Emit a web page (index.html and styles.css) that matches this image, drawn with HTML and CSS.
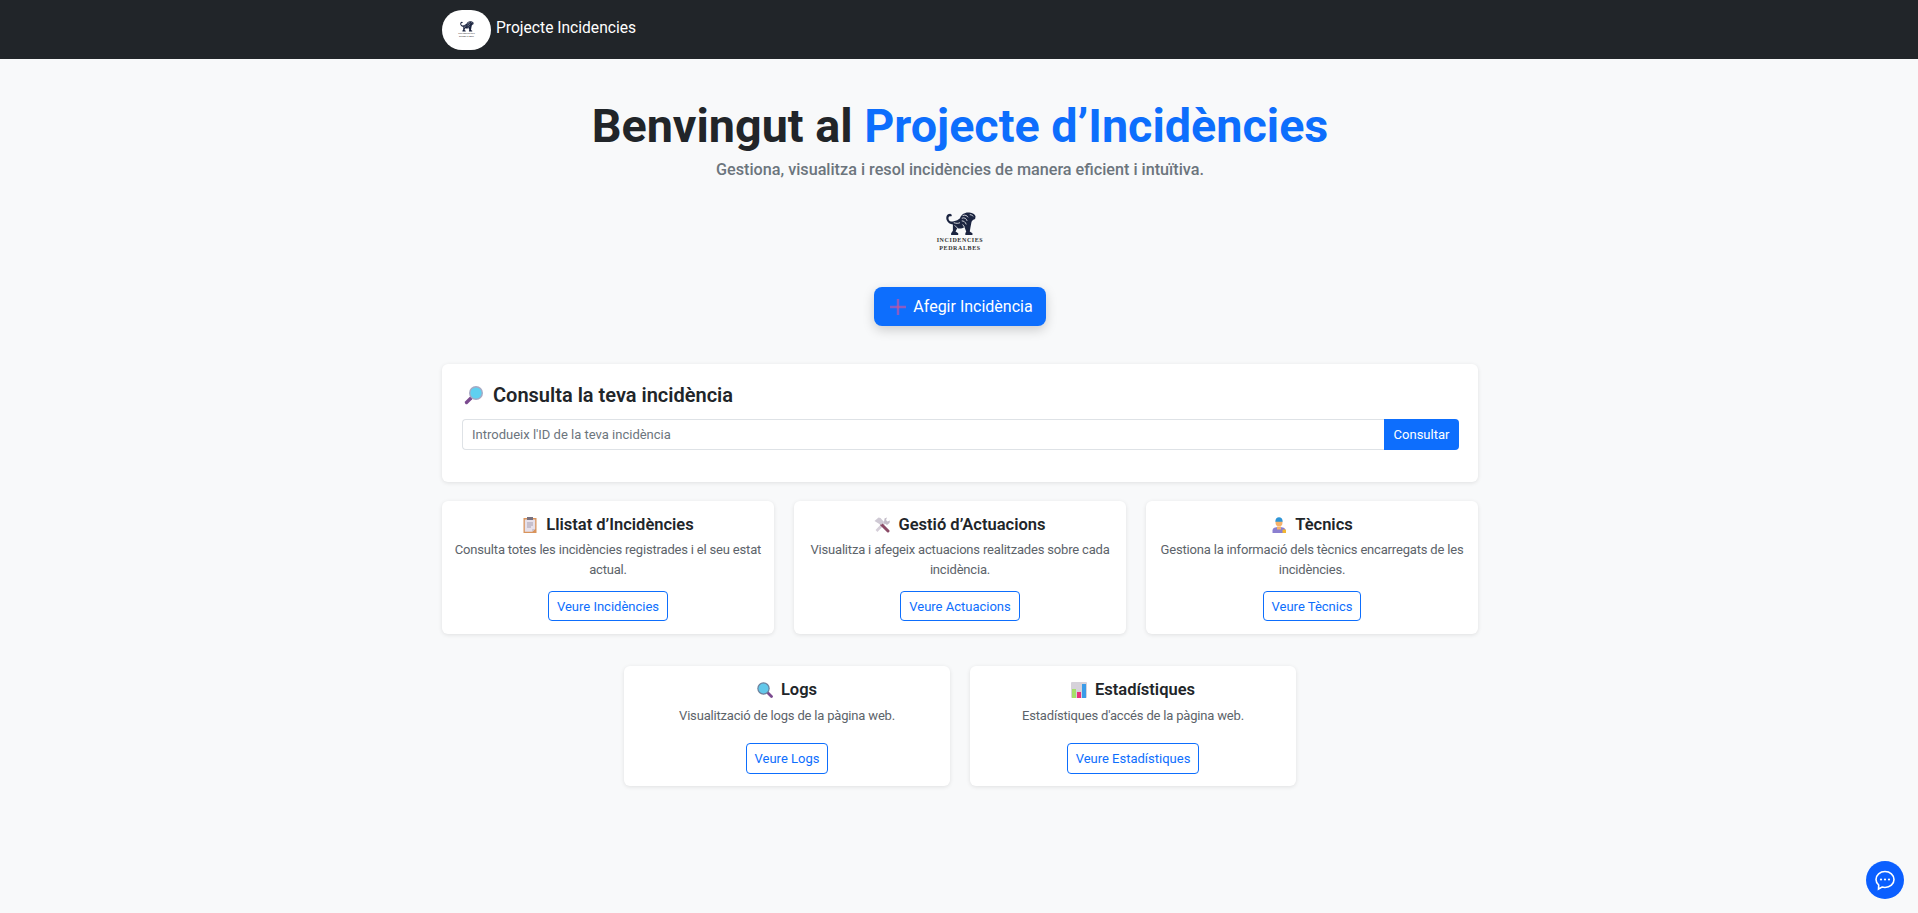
FILE: index.html
```html
<!DOCTYPE html>
<html lang="ca">
<head>
    <meta charset="UTF-8">
    <meta name="viewport" content="width=device-width, initial-scale=1.0">
    <title>Projecte Incidencies</title>
    <link rel="stylesheet" href="styles.css">
</head>
<body>
    <svg class="sprites" width="0" height="0">
        <symbol id="lion" viewBox="0 0 36 27">
            <path fill="#1b2440" d="M18 7C19 3 23 .5 27 .5C31 .5 35 2 35.500 5L35 8L32.500 9L31 11L30 16L29 22L32 24L32 26L24 26L24 24L25 22L23 17C20 19 17 19 15 18L13 22L16 24L16 26L8 26L8 24L10 21L10 14C7 14 4 12 3 9C2 6 3 2 7 2L9 3.500L8 5C5 4 4.500 7 5.500 9C6.500 11 9 11 11 10.500C14 9.500 16 9 18 7Z"/>
            <path fill="none" stroke="#f8f9fa" stroke-width=".9" d="M21 4C24 3 26 4 27 6M20 7C23 6 25 7 26 10M20 10C22 10 24 11 25 14M29 3C31 3 32 4 33 5M15 18L12 15M23 17L21 14M11 12C14 13 16 13 18 12"/>
        </symbol>
    </svg>

    <nav class="navbar">
        <div class="container">
            <a class="brand" href="#">
                <span class="brand-logo">
                    <svg class="brand-lion"><use href="#lion"/></svg>
                    <span class="brand-logo-text">INCIDENCIES</span>
                    <span class="brand-logo-text">PEDRALBES</span>
                </span>
                <span class="brand-name">Projecte Incidencies</span>
            </a>
        </div>
    </nav>

    <main class="container">
        <section class="hero">
            <h1>Benvingut al <span class="accent">Projecte d’Incidències</span></h1>
            <p class="lead">Gestiona, visualitza i resol incidències de manera eficient i intuïtiva.</p>
            <div class="logo">
                <svg class="logo-lion"><use href="#lion"/></svg>
                <span class="logo-text">INCIDENCIES</span>
                <span class="logo-text">PEDRALBES</span>
            </div>
            <a class="add-btn" href="#">
                <svg class="plus" viewBox="0 0 16 16"><path fill="#8a5cc4" d="M6.800 0h2.400v6.800H16v2.400H9.200V16H6.800V9.200H0V6.800h6.800z"/><path fill="#c0568f" d="M6.800 6.800h2.400v2.400H6.800z"/></svg>
                Afegir Incidència
            </a>
        </section>

        <section class="search-card">
            <h2>
                <svg class="search-icon" viewBox="0 0 20 20">
                    <path stroke="#7b4a8f" stroke-width="3.400" stroke-linecap="round" d="M2.500 17.500L7 13"/>
                    <circle cx="12" cy="8" r="7" fill="#a5a9c4"/>
                    <circle cx="12" cy="8" r="5.600" fill="#5fd0f0"/>
                </svg>
                Consulta la teva incidència
            </h2>
            <form class="search-form" action="#">
                <input type="text" placeholder="Introdueix l'ID de la teva incidència">
                <button type="submit">Consultar</button>
            </form>
        </section>

        <div class="cards">
            <article class="card">
                <h3>
                    <svg class="icon" viewBox="0 0 16 16">
                        <rect x="1.500" y="1" width="13" height="15" fill="#d9945c"/>
                        <path fill="#e6e0ea" d="M2.800 2.500h10.400v9.500l-3 2.800H2.800z"/>
                        <path fill="#c9c0cc" d="M13.200 12l-3 2.800V12z"/>
                        <rect x="5" y="0" width="6" height="3" fill="#77707e"/>
                        <path stroke="#a79fb0" d="M5 6h6M5 8h6M5 10h4"/>
                    </svg>
                    Llistat d’Incidències
                </h3>
                <p>Consulta totes les incidències registrades i el seu estat actual.</p>
                <a class="card-btn" href="#">Veure Incidències</a>
            </article>
            <article class="card">
                <h3>
                    <svg class="icon" viewBox="0 0 16 16">
                        <path stroke="#d6cfd9" stroke-width="2.600" d="M2.500 14L11.500 4.500"/>
                        <path fill="#c3bcc8" d="M10.500 1.500L13 .5l-1 2.500 1.500 1.500L16 3.500 15.500 6 13 8 10 6z"/>
                        <path stroke="#8a4a66" stroke-width="3" stroke-linecap="round" d="M7.500 7.500l6.500 6.500"/>
                        <path fill="#cfc9d4" d="M.5 4L4.500 .5l2 .5L10 5 7 8z"/>
                    </svg>
                    Gestió d’Actuacions
                </h3>
                <p>Visualitza i afegeix actuacions realitzades sobre cada incidència.</p>
                <a class="card-btn" href="#">Veure Actuacions</a>
            </article>
            <article class="card">
                <h3>
                    <svg class="icon" viewBox="0 0 16 16">
                        <path fill="#8b7fd0" d="M1.500 16v-2.500C1.500 11 4 10 8 10s6.500 1 6.500 3.500V16z"/>
                        <rect x="11.500" y="12.500" width="3.500" height="3.500" fill="#f2b632"/>
                        <circle cx="8" cy="5.800" r="3.500" fill="#f6b26b"/>
                        <path fill="#2f95d6" d="M4.300 4.800C4.300 1.500 6 .3 8 .3s3.700 1.200 3.700 4.500z"/>
                        <rect x="6" y="9.500" width="4" height="3" fill="#f6b26b"/>
                    </svg>
                    Tècnics
                </h3>
                <p>Gestiona la informació dels tècnics encarregats de les incidències.</p>
                <a class="card-btn" href="#">Veure Tècnics</a>
            </article>
        </div>

        <div class="cards cards-small">
            <article class="card">
                <h3>
                    <svg class="icon" viewBox="0 0 16 16">
                        <path stroke="#7b4a8f" stroke-width="2.800" stroke-linecap="round" d="M11 11l3.500 3.500"/>
                        <circle cx="6.500" cy="6.500" r="6.200" fill="#6d7f9b"/>
                        <circle cx="6.500" cy="6.500" r="5" fill="#63c8ea"/>
                    </svg>
                    Logs
                </h3>
                <p>Visualització de logs de la pàgina web.</p>
                <a class="card-btn" href="#">Veure Logs</a>
            </article>
            <article class="card">
                <h3>
                    <svg class="icon" viewBox="0 0 16 16">
                        <rect width="16" height="16" rx="1" fill="#d6d2da"/>
                        <rect x="1" y="7" width="4" height="9" fill="#a5e06a"/>
                        <rect x="6" y="10" width="4" height="6" fill="#e8327c"/>
                        <rect x="11" y="2" width="4" height="14" fill="#3a9be8"/>
                    </svg>
                    Estadístiques
                </h3>
                <p>Estadístiques d'accés de la pàgina web.</p>
                <a class="card-btn" href="#">Veure Estadístiques</a>
            </article>
        </div>
    </main>

    <a class="chat-btn" href="#">
        <svg viewBox="0 0 24 24" width="24" height="24">
            <path fill="none" stroke="#fff" stroke-width="1.600" d="M12 3.500c5 0 9 3.400 9 8s-4 8-9 8c-1 0-2-.1-3-.4L5.500 21l.2-4C4 15.500 3 13.600 3 11.500c0-4.600 4-8 9-8z"/>
            <circle cx="8" cy="11.500" r="1.100" fill="#fff"/>
            <circle cx="12" cy="11.500" r="1.100" fill="#fff"/>
            <circle cx="16" cy="11.500" r="1.100" fill="#fff"/>
        </svg>
    </a>
</body>
</html>
```

FILE: styles.css
```css
*{
    margin: 0;
    padding: 0;
    box-sizing: border-box;
}
body{
    min-height: 100vh;
    background: #f8f9fa;
    color: #212529;
    font-family: Roboto, "Open Sans", sans-serif;
    font-size: 13px;
}
a{
    text-decoration: none;
}
.sprites{
    position: absolute;
}
.container{
    width: 1036px;
    margin: 0 440px 0 442px;
}

/* navbar */
.navbar{
    height: 59px;
    background: #212529;
    display: flex;
    align-items: center;
}
.brand{
    display: flex;
    align-items: center;
    gap: 5px;
    color: #fff;
    font-size: 15.600px;
}
.brand-name{
    margin-bottom: 4px;
}
.brand-logo{
    width: 49px;
    height: 40px;
    border-radius: 20px;
    background: #fff;
    display: flex;
    flex-direction: column;
    align-items: center;
    justify-content: center;
}
.brand-lion{
    width: 15px;
    height: 11px;
}
.brand-logo-text{
    color: #333;
    font-family: "Liberation Serif", serif;
    font-size: 2.500px;
    font-weight: 700;
    line-height: 3px;
}

/* hero */
.hero{
    display: flex;
    flex-direction: column;
    align-items: center;
    padding-top: 38px;
}
h1{
    font-size: 46.700px;
    font-weight: 700;
    line-height: 58px;
}
.accent{
    color: #0d6efd;
}
.lead{
    color: #6c757d;
    font-size: 16.200px;
    font-weight: 500;
    line-height: 24px;
    margin-top: 3px;
}
.logo{
    display: flex;
    flex-direction: column;
    align-items: center;
    margin-top: 30px;
    height: 40px;
}
.logo-lion{
    width: 36px;
    height: 26px;
}
.logo-text{
    color: #333;
    font-family: "Liberation Serif", serif;
    font-size: 6px;
    font-weight: 700;
    letter-spacing: 0.6px;
    line-height: 8px;
}
.add-btn{
    margin-top: 35px;
    width: 172px;
    height: 39px;
    padding-left: 3px;
    border-radius: 8px;
    background: #0d6efd;
    color: #fff;
    font-size: 16px;
    display: flex;
    align-items: center;
    justify-content: center;
    gap: 7px;
    box-shadow: 0 4px 12px rgba(0, 0, 0, 0.18);
}
.plus{
    width: 16px;
    height: 16px;
}

/* consulta */
.search-card{
    margin-top: 38px;
    height: 118px;
    padding: 19px 19px 0 20px;
    background: #fff;
    border-radius: 6px;
    box-shadow: 0 1px 4px rgba(0, 0, 0, 0.1);
}
.search-card h2{
    display: flex;
    align-items: center;
    gap: 9px;
    font-size: 20px;
    font-weight: 600;
    line-height: 24px;
    margin: 0 0 12px 2px;
}
.search-icon{
    width: 20px;
    height: 20px;
}
.search-form{
    display: flex;
    height: 31px;
}
.search-form input{
    flex: 1;
    padding: 0 9px;
    border: 1px solid #dee2e6;
    border-right: none;
    border-radius: 4px 0 0 4px;
    outline: none;
    color: #212529;
    font: inherit;
}
.search-form input::placeholder{
    color: #6c757d;
}
.search-form button{
    width: 75px;
    border: none;
    border-radius: 0 4px 4px 0;
    background: #0d6efd;
    color: #fff;
    font: inherit;
}

/* targetes */
.cards{
    display: flex;
    gap: 20px;
    margin-top: 19px;
}
.card{
    flex: 1;
    height: 133px;
    padding: 12px 10px 0;
    background: #fff;
    border-radius: 6px;
    box-shadow: 0 1px 4px rgba(0, 0, 0, 0.1);
    display: flex;
    flex-direction: column;
    align-items: center;
    text-align: center;
}
.card h3{
    display: flex;
    align-items: center;
    gap: 8px;
    font-size: 16.500px;
    font-weight: 600;
    line-height: 24px;
}
.icon{
    width: 16px;
    height: 16px;
}
.card p{
    color: #5c636a;
    letter-spacing: -0.18px;
    line-height: 20px;
    margin: 3px 0 11px;
}
.card-btn{
    height: 30px;
    padding: 0 8px;
    border: 1px solid #0d6efd;
    border-radius: 4px;
    color: #0d6efd;
    display: flex;
    align-items: center;
}
.cards-small{
    width: 672px;
    margin: 32px auto 0;
}
.cards-small .card{
    height: 120px;
}
.cards-small .card p{
    margin: 4px 0 17px;
}
.cards-small .card-btn{
    height: 31px;
}

/* xat */
.chat-btn{
    position: fixed;
    right: 14px;
    bottom: 14px;
    width: 38px;
    height: 38px;
    border-radius: 50%;
    background: #0b5fff;
    display: flex;
    align-items: center;
    justify-content: center;
}
```
